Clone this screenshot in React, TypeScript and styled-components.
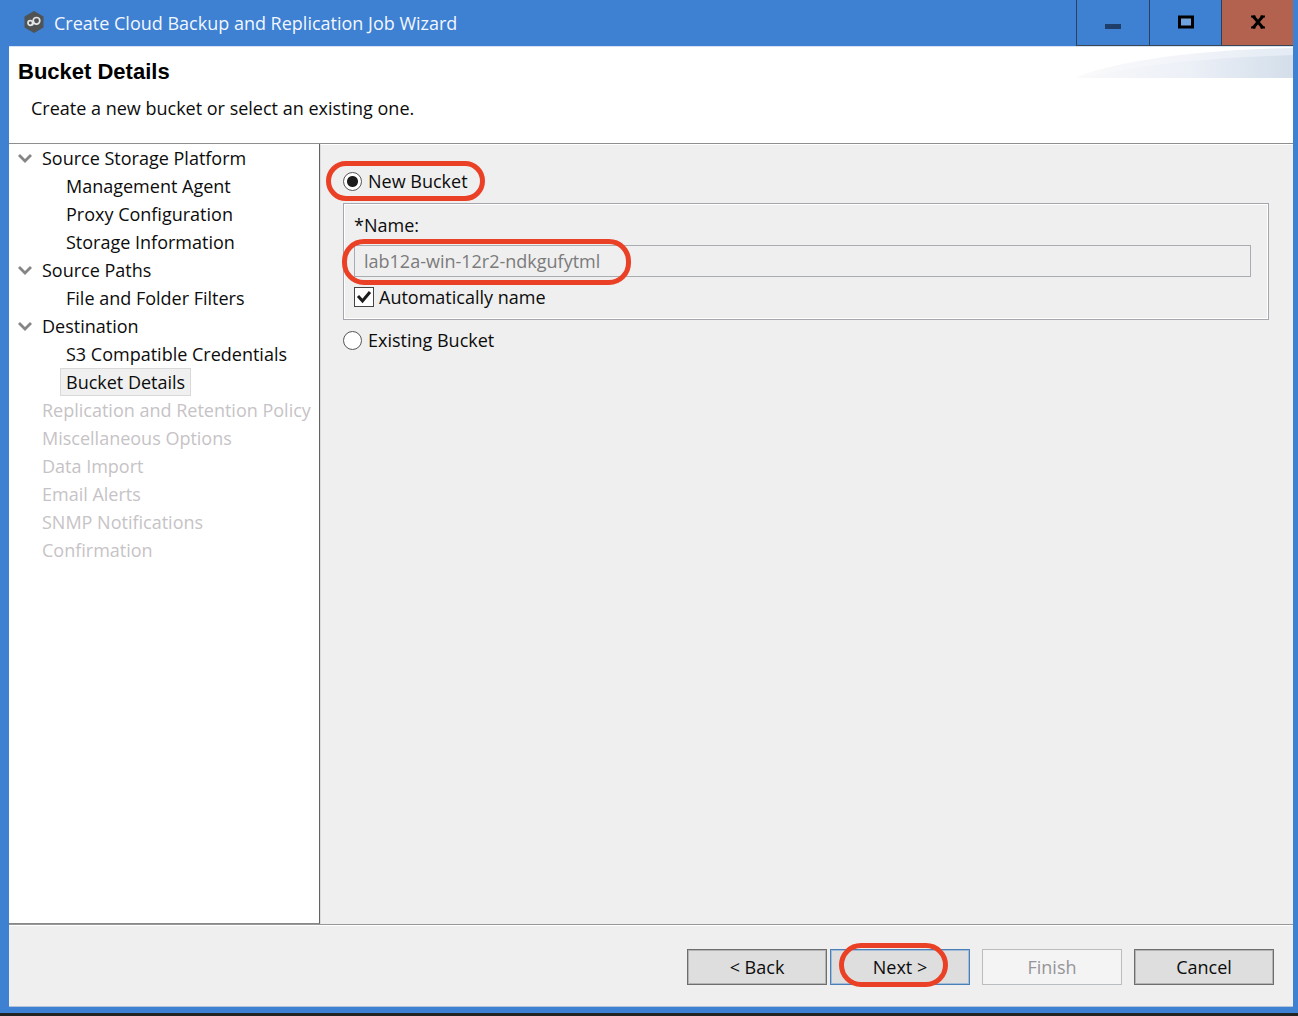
import React, { useState } from "react";
import styled, { createGlobalStyle, css } from "styled-components";

const GlobalStyle = createGlobalStyle`
  *, *::before, *::after { box-sizing: border-box; }
  body { margin: 0; background: #232323; }
  body, button, input { font-family: "Open Sans", "Noto Sans", sans-serif; font-size: 18px; line-height: 28px; color: #0c0c0c; }
  button { padding: 0; border: 0; background: none; }
`;

const Window = styled.div`
  display: flex;
  flex-direction: column;
  min-height: 100vh;
  padding: 0 5px 6px 9px;
  background: #3e80d2;
  border-bottom: 3px solid #232323;
`;

const TitleBar = styled.header`
  display: flex;
  align-items: center;
  height: 46px;
  padding-left: 14px;
  color: #f2f7ff;
`;

const WindowTitle = styled.span`
  flex: 1;
  padding-left: 9px;
`;

const WindowButton = styled.button<{ $wide?: boolean; $danger?: boolean }>`
  display: flex;
  align-items: center;
  justify-content: center;
  width: ${(p) => (p.$wide ? 73 : 72)}px;
  height: 46px;
  padding-bottom: 2px;
  border-left: 1px solid #29415f;
  border-bottom: 1px solid #3a4654;
  background: ${(p) => (p.$danger ? "#b36250" : "transparent")};
`;

const Client = styled.div`
  flex: 1;
  display: flex;
  flex-direction: column;
  background: #efefef;
  border-bottom: 1px solid #b4c4d8;
`;

const PageHeader = styled.section`
  display: flex;
  justify-content: space-between;
  height: 98px;
  background: #fff;
  border-top: 1px solid #d5e2f2;
  border-bottom: 1px solid #8e8e8e;
`;

const HeaderText = styled.div`
  padding: 11px 0 0 9px;
`;

const PageTitle = styled.h1`
  margin: 0;
  font: bold 22px/28px "Liberation Sans", Arial, sans-serif;
  color: #000;
`;

const PageHint = styled.p`
  margin: 8px 0 0;
  padding-left: 13px;
`;

const Body = styled.div`
  flex: 1;
  display: flex;
  border-bottom: 1px solid #989898;
`;

const Sidebar = styled.nav`
  width: 311px;
  flex: none;
  background: #fff;
  border-right: 1px solid #626262;
  border-bottom: 1px solid #888;
`;

const Tree = styled.ul`
  margin: 0;
  padding: 0;
  list-style: none;
`;

const TreeRow = styled.div<{ $child?: boolean }>`
  display: flex;
  align-items: center;
  height: 28px;
  padding-left: ${(p) => (p.$child ? 51 : 8)}px;
`;

const Expander = styled.button`
  display: flex;
  align-items: center;
  width: 19px;
  height: 28px;
`;

const Gap = styled.span`
  width: 19px;
`;

const TreeItem = styled.button<{ $selected?: boolean }>`
  height: 28px;
  padding: 0 5px;
  border: 1px solid transparent;
  line-height: 26px;
  white-space: nowrap;
  ${(p) =>
    p.$selected &&
    css`
      background: #f0f0f0;
      border-color: #d9d9d9;
    `}
  &:disabled {
    color: #c6c3c6;
  }
`;

const Main = styled.main`
  flex: 1;
  padding: 22px 24px 0 22px;
  border-top: 1px solid #fff;
  border-left: 1px solid #dcdcdc;
`;

const OptionRow = styled.div`
  display: flex;
`;

const Option = styled.label`
  position: relative;
  display: flex;
  align-items: center;
  gap: 6px;
  height: 28px;
`;

const Radio = styled.input`
  appearance: none;
  width: 19px;
  height: 19px;
  margin: 0;
  border: 1px solid #555;
  border-radius: 50%;
  background: #fff;
  &:checked {
    background: radial-gradient(circle, #1c1c1c 0 5px, #fff 6px);
  }
`;

const Group = styled.fieldset`
  min-width: 0;
  height: 117px;
  margin: 8px 0 6px;
  padding: 7px 17px 0 10px;
  border: 1px solid #a6a6ae;
  box-shadow: inset 0 0 0 1px #fff;
`;

const FieldLabel = styled.label`
  display: block;
  height: 28px;
`;

const FieldWrap = styled.div`
  position: relative;
  margin: 6px 0;
`;

const TextField = styled.input`
  display: block;
  width: 100%;
  height: 32px;
  padding: 0 9px;
  border: 1px solid #a9adb1;
  border-radius: 0;
  background: #efefef;
  color: #7b7b7b;
`;

const CheckOption = styled.label`
  display: flex;
  align-items: center;
  gap: 5px;
  height: 28px;
`;

const CheckBox = styled.span`
  display: grid;
  width: 20px;
  height: 20px;
  > * {
    grid-area: 1 / 1;
    place-self: center;
  }
  svg {
    pointer-events: none;
    visibility: hidden;
  }
  input {
    appearance: none;
    width: 20px;
    height: 20px;
    margin: 0;
    border: 1px solid #444;
    background: #fff;
  }
  input:checked + svg {
    visibility: visible;
  }
`;

const Footer = styled.footer`
  display: flex;
  justify-content: flex-end;
  height: 81px;
  padding: 23px 19px 0;
  border-top: 1px solid #fff;
`;

const ButtonPair = styled.div`
  display: flex;
  gap: 3px;
`;

const FooterGroup = styled.div`
  display: flex;
  gap: 12px;
`;

const PushButton = styled.button<{ $primary?: boolean }>`
  position: relative;
  width: 140px;
  height: 36px;
  border: 1px solid ${(p) => (p.$primary ? "#4a7fb8" : "#6e6e6e")};
  box-shadow: inset 0 0 0 1px ${(p) => (p.$primary ? "#a3bdd8" : "#b4b4b4")};
  background: #dedede;
  &:disabled {
    color: #969499;
    background: #f4f4f4;
    border-color: #b9bdc0;
    box-shadow: none;
  }
`;

const Highlight = styled.span<{ $box: string; $width: number; $height: number }>`
  position: absolute;
  inset: ${(p) => p.$box};
  width: ${(p) => p.$width}px;
  height: ${(p) => p.$height}px;
  border: 5px solid #ea4025;
  border-radius: 22px;
  pointer-events: none;
`;

const steps = [
  { label: "Source Storage Platform", children: ["Management Agent", "Proxy Configuration", "Storage Information"] },
  { label: "Source Paths", children: ["File and Folder Filters"] },
  { label: "Destination", children: ["S3 Compatible Credentials", "Bucket Details"] },
  { label: "Replication and Retention Policy" },
  { label: "Miscellaneous Options" },
  { label: "Data Import" },
  { label: "Email Alerts" },
  { label: "SNMP Notifications" },
  { label: "Confirmation" },
];

const AppIcon = () => (
  <svg width="22" height="24" viewBox="0 0 22 24" aria-hidden="true">
    <path d="M11 0 20.500 5.500v11L11 22l-9.500-5.500v-11z" fill="#505354" />
    <g fill="none" stroke="#e4e6e8" strokeWidth="1.700">
      <circle cx="7.300" cy="12" r="2.300" />
      <circle cx="13.500" cy="9.800" r="3.300" />
      <path d="M9 14c1.500-.5 1.300-2.500 1.700-3.500" />
    </g>
  </svg>
);

export default function App() {
  const [bucket, setBucket] = useState("new");
  const [autoName, setAutoName] = useState(true);
  const [closed, setClosed] = useState<string[]>([]);
  const toggle = (label: string) =>
    setClosed((c) => (c.includes(label) ? c.filter((l) => l !== label) : [...c, label]));

  return (
    <Window>
      <GlobalStyle />
      <TitleBar>
        <AppIcon />
        <WindowTitle>Create Cloud Backup and Replication Job Wizard</WindowTitle>
        <WindowButton $wide aria-label="Minimize">
          <svg width="16" height="14" viewBox="0 0 16 14"><path d="M0 9h16v5H0z" fill="#1f3e69" /></svg>
        </WindowButton>
        <WindowButton aria-label="Maximize">
          <svg width="16" height="14" viewBox="0 0 16 14"><path d="M1.500 2h13v10h-13z" fill="#6fa3e0" stroke="#000" strokeWidth="3" /></svg>
        </WindowButton>
        <WindowButton $danger aria-label="Close">
          <svg width="16" height="14" viewBox="0 0 16 14">
            <path d="M3 1 13 13M13 1 3 13" stroke="#000" strokeWidth="3" />
            <path d="M1 1.500h4.500M10.500 1.500h4.500M1 12.500h4.500M10.500 12.500h4.500" stroke="#000" strokeWidth="2" />
          </svg>
        </WindowButton>
      </TitleBar>
      <Client>
        <PageHeader>
          <HeaderText>
            <PageTitle>Bucket Details</PageTitle>
            <PageHint>Create a new bucket or select an existing one.</PageHint>
          </HeaderText>
          <svg width="218" height="31" viewBox="0 0 218 31" aria-hidden="true">
            <defs>
              <linearGradient id="swoosh">
                <stop offset="0" stopColor="#fafafb" />
                <stop offset=".5" stopColor="#f2f4f9" />
                <stop offset="1" stopColor="#e4ebf4" />
              </linearGradient>
              <linearGradient id="swooshInner">
                <stop offset="0" stopColor="#f8f8fa" />
                <stop offset=".5" stopColor="#ecf0f7" />
                <stop offset="1" stopColor="#d3deea" />
              </linearGradient>
            </defs>
            <path d="M0 31C35 16 110 3 218 1v30z" fill="url(#swoosh)" />
            <path d="M12 31C60 18 130 11 218 8v23z" fill="url(#swooshInner)" />
          </svg>
        </PageHeader>
        <Body>
          <Sidebar aria-label="Wizard steps">
            <Tree>
              {steps.map(({ label, children }) => (
                <li key={label}>
                  <TreeRow>
                    {children ? (
                      <Expander aria-label={`Toggle ${label}`} onClick={() => toggle(label)}>
                        <svg width="16" height="10" viewBox="0 0 16 10">
                          <path d="m2 2 6 6 6-6" fill="none" stroke="#858585" strokeWidth="2.800" />
                        </svg>
                      </Expander>
                    ) : (
                      <Gap />
                    )}
                    <TreeItem disabled={!children}>{label}</TreeItem>
                  </TreeRow>
                  {children && !closed.includes(label) && (
                    <Tree>
                      {children.map((child) => (
                        <li key={child}>
                          <TreeRow $child>
                            <TreeItem $selected={child === "Bucket Details"}>{child}</TreeItem>
                          </TreeRow>
                        </li>
                      ))}
                    </Tree>
                  )}
                </li>
              ))}
            </Tree>
          </Sidebar>
          <Main>
            <OptionRow>
              <Option>
                <Radio type="radio" name="bucket" checked={bucket === "new"} onChange={() => setBucket("new")} />
                New Bucket
                <Highlight $box="-6px auto auto -17px" $width={159} $height={40} />
              </Option>
            </OptionRow>
            <Group>
              <FieldLabel htmlFor="bucket-name">*Name:</FieldLabel>
              <FieldWrap>
                <TextField id="bucket-name" type="text" disabled={autoName} defaultValue="lab12a-win-12r2-ndkgufytml" />
                <Highlight $box="-6px auto auto -12px" $width={289} $height={46} />
              </FieldWrap>
              <CheckOption>
                <CheckBox>
                  <input type="checkbox" checked={autoName} onChange={(e) => setAutoName(e.target.checked)} />
                  <svg width="16" height="14" viewBox="0 0 16 14">
                    <path d="m2 6 4.500 5L14 2" fill="none" stroke="#1c1c1c" strokeWidth="3" />
                  </svg>
                </CheckBox>
                Automatically name
              </CheckOption>
            </Group>
            <OptionRow>
              <Option>
                <Radio type="radio" name="bucket" checked={bucket === "existing"} onChange={() => setBucket("existing")} />
                Existing Bucket
              </Option>
            </OptionRow>
          </Main>
        </Body>
        <Footer>
          <FooterGroup>
            <ButtonPair>
              <PushButton>&lt; Back</PushButton>
              <PushButton $primary>
                Next &gt;
                <Highlight $box="-7px auto auto 8px" $width={109} $height={44} />
              </PushButton>
            </ButtonPair>
            <PushButton disabled>Finish</PushButton>
            <PushButton>Cancel</PushButton>
          </FooterGroup>
        </Footer>
      </Client>
    </Window>
  );
}
